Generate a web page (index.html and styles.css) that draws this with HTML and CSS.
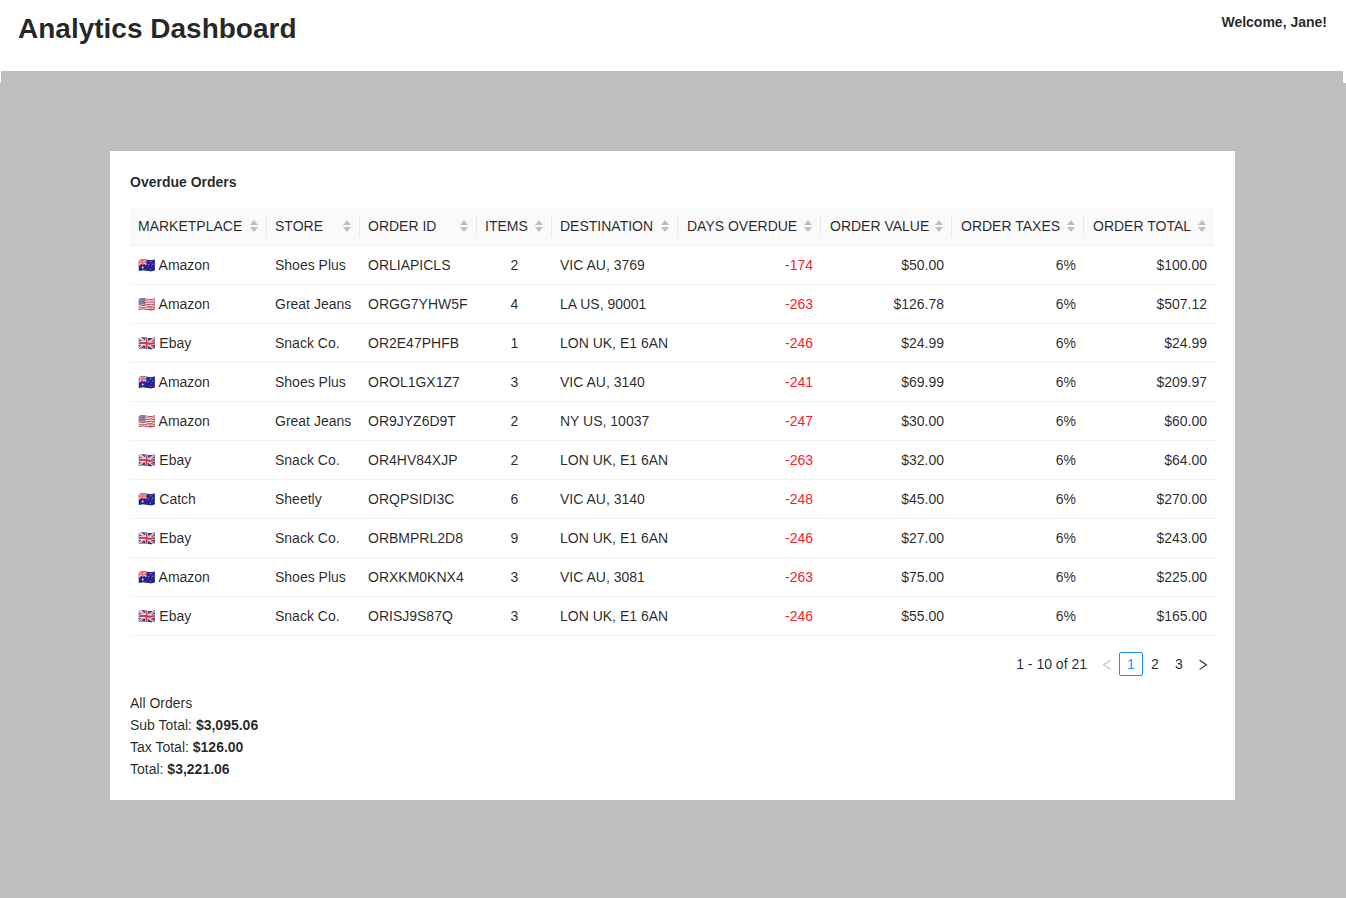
FILE: index.html
```html
<!DOCTYPE html>
<html lang="en">
<head>
<meta charset="utf-8">
<title>Analytics Dashboard</title>
<link rel="stylesheet" href="styles.css">
</head>
<body>
<header class="page-header">
  <div class="header-bar">
    <h1 class="page-title">Analytics Dashboard</h1>
    <span class="welcome">Welcome, Jane!</span>
  </div>
  <div class="header-strip"></div>
</header>
<main class="content">
  <section class="card">
    <h2 class="card-title">Overdue Orders</h2>
    <table class="orders">
      <colgroup>
        <col class="col-market"><col class="col-store"><col class="col-id"><col class="col-items"><col class="col-dest"><col class="col-days"><col class="col-value"><col class="col-taxes"><col class="col-total">
      </colgroup>
      <thead><tr id="head"></tr></thead>
      <tbody id="rows"></tbody>
    </table>
    <nav class="pagination" aria-label="Pages">
      <span class="range">1 - 10 of 21</span>
      <button class="page" disabled aria-label="Previous"><svg class="arrow" viewBox="0 0 12 12"><path d="M9.4 2.2 2.6 6.8 9.4 11.4"/></svg></button>
      <button class="page active">1</button>
      <button class="page">2</button>
      <button class="page">3</button>
      <button class="page" aria-label="Next"><svg class="arrow" viewBox="0 0 12 12"><path d="M2.6 2.2 9.4 6.8 2.6 11.4"/></svg></button>
    </nav>
    <div class="totals">
      <div>All Orders</div>
      <div>Sub Total: <strong>$3,095.06</strong></div>
      <div>Tax Total: <strong>$126.00</strong></div>
      <div>Total: <strong>$3,221.06</strong></div>
    </div>
  </section>
</main>
<script src="app.js"></script>
</body>
</html>
```
FILE: styles.css
```css
* { box-sizing: border-box; }
body {
  margin: 0;
  min-height: 100vh;
  background: #bfbfbf;
  color: rgba(0, 0, 0, 0.85);
  font: 14px/22px "Liberation Sans", Arial, "Noto Color Emoji", sans-serif;
}
.page-header { background: #fff; padding: 0 3px 0 1px; }
.header-bar {
  display: flex;
  justify-content: space-between;
  align-items: flex-start;
  height: 71px;
  padding: 11px 16px 0 17px;
}
.page-title { margin: 0; font-size: 28px; line-height: 36px; font-weight: 700; }
.welcome { font-weight: 700; }
.header-strip { height: 12px; background: #bfbfbf; }
.content { padding: 68px 17px 98px 16px; }
.card { width: 100%; max-width: 1125px; margin: 0 auto; padding: 20px; background: #fff; }
.card-title { margin: 0 0 14px; font-size: 14px; line-height: 22px; font-weight: 700; }
.orders { width: 100%; table-layout: fixed; border-collapse: separate; border-spacing: 0; }
.col-market { width: 137px; }
.col-store { width: 93px; }
.col-id { width: 117px; }
.col-items { width: 75px; }
.col-dest { width: 126px; }
.col-days { width: 143px; }
.col-value { width: 131px; }
.col-taxes { width: 132px; }
.col-total { width: 131px; }
.orders th, .orders td {
  padding: 8px;
  border-bottom: 1px solid #f0f0f0;
  text-align: left;
  font-weight: 400;
  white-space: nowrap;
}
.orders th { position: relative; background: #fafafa; }
.orders th:first-child { border-top-left-radius: 2px; }
.orders th:last-child { border-top-right-radius: 2px; }
.orders th:not(:last-child)::after {
  content: "";
  position: absolute;
  top: 8px;
  right: 0;
  width: 1px;
  height: 22px;
  background: #ebebeb;
}
.sort {
  display: flex;
  align-items: center;
  justify-content: space-between;
  width: 100%;
  padding: 0;
  border: 0;
  background: none;
  color: inherit;
  font: inherit;
}
.sort-icon { flex: none; width: 10px; height: 14px; fill: #bfbfbf; }
.orders .center { text-align: center; }
.orders .right { text-align: right; }
.orders .late { color: #f5222d; }
.orders th:nth-child(n+6) { padding-left: 9px; }
.pagination { display: flex; justify-content: flex-end; margin: 16px 0; }
.range { margin-right: 8px; line-height: 24px; }
.page {
  display: flex;
  align-items: center;
  justify-content: center;
  width: 24px;
  height: 24px;
  padding: 0;
  border: 1px solid transparent;
  border-radius: 2px;
  background: #fff;
  color: inherit;
  font: inherit;
}
.page.active { border-color: #1890ff; color: #1890ff; }
.page:disabled { color: rgba(0, 0, 0, 0.25); }
.arrow { width: 12px; height: 12px; fill: none; stroke: currentColor; stroke-width: 1.1; }
```
FILE: app.js
```js
const headings = ["MARKETPLACE", "STORE", "ORDER ID", "ITEMS", "DESTINATION", "DAYS OVERDUE", "ORDER VALUE", "ORDER TAXES", "ORDER TOTAL"];
const orders = [
  ["🇦🇺 Amazon", "Shoes Plus", "ORLIAPICLS", 2, "VIC AU, 3769", -174, "$50.00", "6%", "$100.00"],
  ["🇺🇸 Amazon", "Great Jeans", "ORGG7YHW5F", 4, "LA US, 90001", -263, "$126.78", "6%", "$507.12"],
  ["🇬🇧 Ebay", "Snack Co.", "OR2E47PHFB", 1, "LON UK, E1 6AN", -246, "$24.99", "6%", "$24.99"],
  ["🇦🇺 Amazon", "Shoes Plus", "OROL1GX1Z7", 3, "VIC AU, 3140", -241, "$69.99", "6%", "$209.97"],
  ["🇺🇸 Amazon", "Great Jeans", "OR9JYZ6D9T", 2, "NY US, 10037", -247, "$30.00", "6%", "$60.00"],
  ["🇬🇧 Ebay", "Snack Co.", "OR4HV84XJP", 2, "LON UK, E1 6AN", -263, "$32.00", "6%", "$64.00"],
  ["🇦🇺 Catch", "Sheetly", "ORQPSIDI3C", 6, "VIC AU, 3140", -248, "$45.00", "6%", "$270.00"],
  ["🇬🇧 Ebay", "Snack Co.", "ORBMPRL2D8", 9, "LON UK, E1 6AN", -246, "$27.00", "6%", "$243.00"],
  ["🇦🇺 Amazon", "Shoes Plus", "ORXKM0KNX4", 3, "VIC AU, 3081", -263, "$75.00", "6%", "$225.00"],
  ["🇬🇧 Ebay", "Snack Co.", "ORISJ9S87Q", 3, "LON UK, E1 6AN", -246, "$55.00", "6%", "$165.00"]
];
const cellClass = ["", "", "", "center", "", "right late", "right", "right", "right"];
const icon = '<svg class="sort-icon" viewBox="0 0 10 14"><path d="M5 1 9 6H1zM5 13 9 8H1z"/></svg>';
document.getElementById("head").innerHTML = headings
  .map(h => `<th scope="col"><button class="sort"><span>${h}</span>${icon}</button></th>`).join("");
document.getElementById("rows").innerHTML = orders
  .map(o => `<tr>${o.map((v, i) => `<td class="${cellClass[i]}">${v}</td>`).join("")}</tr>`).join("");
```
